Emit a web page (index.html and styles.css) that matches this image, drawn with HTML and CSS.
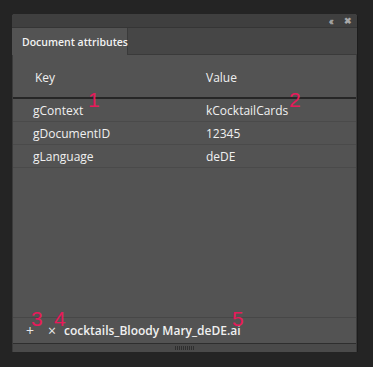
FILE: index.html
```html
<!DOCTYPE html>
<html lang="en">
<head>
    <meta charset="UTF-8">
    <meta name="viewport" content="width=device-width, initial-scale=1.0">
    <title>Document attributes</title>
    <link rel="stylesheet" href="styles.css">
</head>
<body>
    <div class="panel">
        <div class="titlebar">
            <span class="collapse">&#x2039;&#x2039;</span>
            <span class="close">&#x2716;</span>
        </div>
        <div class="tabs">
            <div class="tab">Document attributes</div>
        </div>
        <div class="content">
            <div class="head">
                <div class="col-key">Key</div>
                <div class="col-value">Value</div>
            </div>
            <div class="row">
                <div class="col-key">gContext</div>
                <div class="col-value">kCocktailCards</div>
            </div>
            <div class="row">
                <div class="col-key">gDocumentID</div>
                <div class="col-value">12345</div>
            </div>
            <div class="row">
                <div class="col-key">gLanguage</div>
                <div class="col-value">deDE</div>
            </div>
            <div class="spacer"></div>
            <div class="footer">
                <span class="btn">+</span>
                <span class="btn">&#x00D7;</span>
                <span class="filename">cocktails_Bloody Mary_deDE.ai</span>
            </div>
            <div class="grip"><span></span></div>
        </div>
        <span class="mark m1">1</span>
        <span class="mark m2">2</span>
        <span class="mark m3">3</span>
        <span class="mark m4">4</span>
        <span class="mark m5">5</span>
    </div>
</body>
</html>
```

FILE: styles.css
```css
body {
    margin: 0;
    padding: 14px 0 0 12px;
    background: #242424;
    font-family: "Open Sans", Arial, sans-serif;
    font-size: 12px;
    color: #f0f0f0;
}
.panel {
    position: relative;
    width: 345px;
    height: 338px;
    display: flex;
    flex-direction: column;
    background: #535353;
    border-radius: 3px 3px 0 0;
    box-shadow: 1px 1px 0 #1c1c1c;
}
.titlebar {
    height: 13px;
    background: #3f3f3f;
    border-radius: 3px 3px 0 0;
    display: flex;
    justify-content: flex-end;
    align-items: center;
    gap: 12px;
    padding-right: 5px;
    color: #a8a8a8;
    font-size: 9px;
    font-weight: bold;
}
.collapse {
    letter-spacing: -2px;
    font-size: 10px;
}
.close {
    font-size: 9px;
}
.tabs {
    height: 26px;
    background: #464646;
    border-top: 1px solid #353535;
    border-bottom: 1px solid #3a3a3a;
    display: flex;
}
.tab {
    width: 105px;
    padding-left: 10px;
    background: #535353;
    border-right: 1px solid #3a3a3a;
    margin-bottom: -1px;
    display: flex;
    align-items: center;
    white-space: nowrap;
    font-size: 10.5px;
    font-weight: 600;
    color: #f2f2f2;
}
.content {
    flex: 1;
    display: flex;
    flex-direction: column;
    border-left: 1px solid #3b3b3b;
    border-right: 1px solid #3b3b3b;
}
.head {
    height: 40px;
    display: flex;
    align-items: center;
    padding-top: 2px;
    border-bottom: 2px solid #262626;
}
.head .col-key {
    padding-left: 22px;
    width: 171px;
}
.row {
    height: 22px;
    display: flex;
    align-items: center;
    border-bottom: 1px solid #4a4a4a;
}
.col-key {
    width: 173px;
    padding-left: 20px;
}
.spacer {
    flex: 1;
    border-bottom: 1px solid #474747;
}
.footer {
    height: 25px;
    display: flex;
    align-items: center;
    padding-left: 13px;
    border-bottom: 1px solid #2e2e2e;
}
.btn {
    width: 22px;
    font-size: 14px;
    color: #e8e8e8;
}
.filename {
    margin-left: -6px;
    font-weight: 600;
    font-size: 12px;
}
.grip {
    height: 8px;
    background: #4a4a4a;
    display: flex;
    justify-content: center;
    align-items: center;
}
.grip span {
    width: 19px;
    height: 4px;
    background: repeating-linear-gradient(90deg, #2f2f2f 0 1px, transparent 1px 2px);
}
.mark {
    position: absolute;
    color: #e8195a;
    font-family: "Liberation Sans", Arial, sans-serif;
    font-size: 21px;
    line-height: 1;
}
.m1 { left: 76px; top: 75px; }
.m2 { left: 277px; top: 75px; }
.m3 { left: 19px; top: 294px; }
.m4 { left: 42px; top: 294px; }
.m5 { left: 220px; top: 294px; }
```
